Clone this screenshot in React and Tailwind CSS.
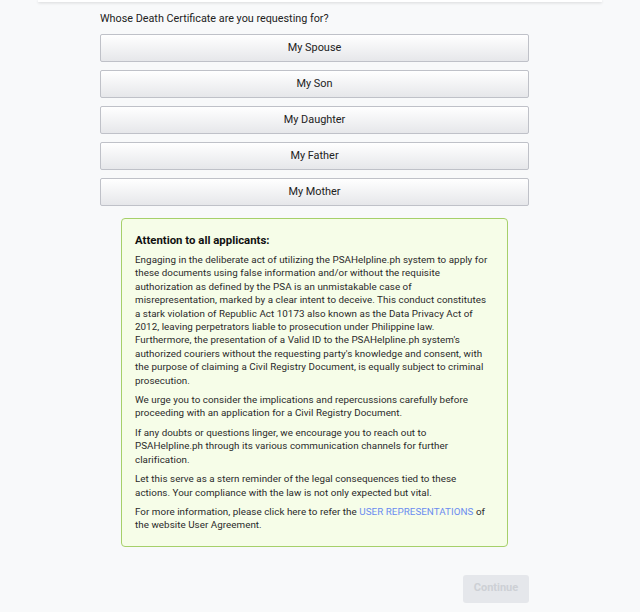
import React from 'react';

const options = ['My Spouse', 'My Son', 'My Daughter', 'My Father', 'My Mother'];

export default function App() {
  return (
    <div className="min-h-[612px] bg-[#f8f9fa] font-['Roboto',sans-serif] text-[#222]">
      {/* bottom edge of the card above */}
      <div className="mx-[38px] h-[2px] bg-white shadow-[0_1px_3px_rgba(0,0,0,0.15)]" />

      <div className="ml-[100px] w-[429px] pt-[9px]">
        <p className="text-[10.8px] leading-[16px] text-[#222]">Whose Death Certificate are you requesting for?</p>

        <div className="mt-[7px] flex flex-col gap-[8px]">
          {options.map((o) => (
            <button
              key={o}
              className="h-[28px] w-full rounded-[2px] border border-[#bfc1c8] bg-gradient-to-b from-white to-[#e6e7ea] text-[10.9px] text-[#222]"
            >
              {o}
            </button>
          ))}
        </div>

        <div className="mx-auto mt-[12px] w-[387px] rounded-[4px] border border-[#a6d06a] bg-[#f6fde8] pl-[13px] pr-[16px] pt-[14px] pb-[14px] text-[9.8px] leading-[13.4px] tracking-[0.05px] text-[#2a2a2a]">
          <h3 className="mb-[6px] text-[11.4px] font-bold leading-[14px] tracking-normal text-[#111]">Attention to all applicants:</h3>
          <p>
            Engaging in the deliberate act of utilizing the PSAHelpline.ph system to apply for these documents using false
            information and/or without the requisite authorization as defined by the PSA is an unmistakable case of
            misrepresentation, marked by a clear intent to deceive. This conduct constitutes a stark violation of Republic
            Act 10173 also known as the Data Privacy Act of 2012, leaving perpetrators liable to prosecution under
            Philippine law. Furthermore, the presentation of a Valid ID to the PSAHelpline.ph system's authorized couriers
            without the requesting party's knowledge and consent, with the purpose of claiming a Civil Registry Document, is
            equally subject to criminal prosecution.
          </p>
          <p className="mt-[6px]">
            We urge you to consider the implications and repercussions carefully before proceeding with an application for
            a Civil Registry Document.
          </p>
          <p className="mt-[6px]">
            If any doubts or questions linger, we encourage you to reach out to PSAHelpline.ph through its various
            communication channels for further clarification.
          </p>
          <p className="mt-[6px]">
            Let this serve as a stern reminder of the legal consequences tied to these actions. Your compliance with the law
            is not only expected but vital.
          </p>
          <p className="mt-[6px]">
            For more information, please click here to refer the{' '}
            <span className="text-[#6b8cf0]">USER REPRESENTATIONS</span> of the website User Agreement.
          </p>
        </div>

        <div className="mt-[28px] flex justify-end">
          <button className="h-[28px] w-[66px] rounded-[3px] bg-[#e5e7eb] text-[11px] font-bold text-[#cdd0d5]">
            Continue
          </button>
        </div>
      </div>
    </div>
  );
}
